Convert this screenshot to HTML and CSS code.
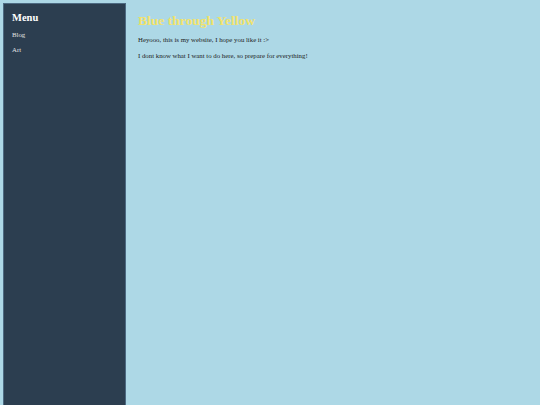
FILE: index.html
```html
<!DOCTYPE html>
<html>
<head>
<meta charset="utf-8">
<link rel="stylesheet" href="styles.css">
</head>
<body>
<div class="layout">
  <nav class="sidebar">
    <h2 class="menu-title">Menu</h2>
    <ul class="menu-list">
      <li>Blog</li>
      <li>Art</li>
    </ul>
  </nav>
  <main class="content">
    <h1 class="title">Blue through Yellow</h1>
    <p class="text">Heyooo, this is my website, I hope you like it :&gt;</p>
    <p class="text">I dont know what I want to do here, so prepare for everything!</p>
  </main>
</div>
</body>
</html>
```
FILE: styles.css
```css
html, body {
  margin: 0;
  padding: 0;
  height: 100%;
}
body {
  background: #add8e6;
  font-family: "Liberation Serif", "Times New Roman", serif;
  overflow: hidden;
}
.layout {
  display: flex;
  padding: 3px 0 0 3px;
  height: 100%;
  box-sizing: border-box;
}
.sidebar {
  width: 123px;
  background: #2c3e50;
  border: 1px solid #4d6a82;
  border-bottom: none;
  box-sizing: border-box;
  padding: 8px 8px;
  color: #ffffff;
}
.menu-title {
  margin: 0 0 8px 0;
  font-size: 10.5px;
  font-weight: bold;
}
.menu-list {
  list-style: none;
  margin: 0;
  padding: 0;
  font-size: 6.8px;
  color: #e4e4e4;
}
.menu-list li {
  margin-bottom: 7px;
  line-height: 8px;
}
.content {
  padding: 10px 12px;
}
.title {
  margin: 0 0 7px 0;
  font-size: 13.5px;
  color: #f2e36a;
  font-weight: bold;
}
.text {
  margin: 0 0 8px 0;
  font-size: 6.8px;
  line-height: 8px;
  color: #1c1c1c;
}
```
